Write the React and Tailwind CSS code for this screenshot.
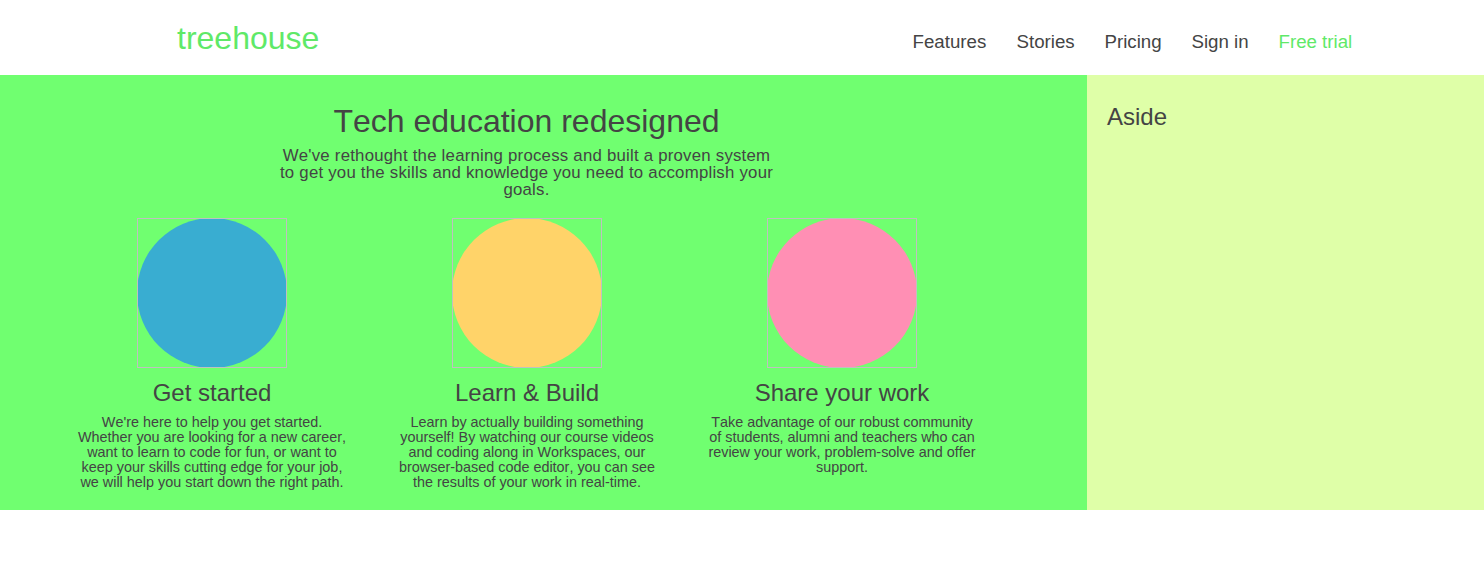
const navItems = [
  { label: 'Features', width: 'w-[74px]' },
  { label: 'Stories', width: 'w-[58px]' },
  { label: 'Pricing', width: 'w-[57px]' },
  { label: 'Sign in', width: 'w-[57px]' },
];

const features = [
  {
    title: 'Get started',
    color: 'fill-[#39add1]',
    lines: [
      "We're here to help you get started.",
      'Whether you are looking for a new career,',
      'want to learn to code for fun, or want to',
      'keep your skills cutting edge for your job,',
      'we will help you start down the right path.',
    ],
  },
  {
    title: 'Learn & Build',
    color: 'fill-[#ffd369]',
    lines: [
      'Learn by actually building something',
      'yourself! By watching our course videos',
      'and coding along in Workspaces, our',
      'browser-based code editor, you can see',
      'the results of your work in real-time.',
    ],
  },
  {
    title: 'Share your work',
    color: 'fill-[#ff8fb4]',
    lines: [
      'Take advantage of our robust community',
      'of students, alumni and teachers who can',
      'review your work, problem-solve and offer',
      'support.',
    ],
  },
];

function Header() {
  return (
    <header className="flex h-[75px] justify-between pl-[177px] pr-[131.5px]">
      <h1 className="mt-[20px] text-[32px] leading-[37px] text-[#5fe968]">treehouse</h1>
      <nav className="mt-[31px] flex gap-[30px] text-[18.7px] leading-[21px] whitespace-nowrap">
        {navItems.map((item) => (
          <a key={item.label} className={item.width}>{item.label}</a>
        ))}
        <a className="w-[74px] text-[#5fe968]">Free trial</a>
      </nav>
    </header>
  );
}

function Feature({ title, color, lines }) {
  return (
    <section className="flex w-[315px] flex-col items-center">
      <svg className="h-[150px] w-[150px] border border-[#c0c0c0]" viewBox="1 1 148 148">
        <circle cx="75" cy="75" r="75" className={color} />
      </svg>
      <h3 className="mt-[11px] pl-px text-[24px] leading-[28px]">{title}</h3>
      <p className="mt-[8px] pl-px text-center text-[14.4px] leading-[15px] whitespace-nowrap">
        {lines.map((line) => (
          <span key={line} className="block">{line}</span>
        ))}
      </p>
    </section>
  );
}

export default function App() {
  return (
    <div className="min-h-[587px] bg-white font-['Liberation_Sans',Arial,sans-serif] text-[#444444] [font-kerning:none]">
      <Header />
      <div className="flex h-[435px]">
        <main className="w-[1087px] bg-[#70ff70] pl-[54px]">
          <div className="w-[945px] pt-[28px] text-center">
            <h2 className="text-[32px] leading-[37px]">Tech education redesigned</h2>
            <p className="mt-[7px] text-[16.8px] leading-[17px] tracking-[0.23px]">
              <span className="block">We&apos;ve rethought the learning process and built a proven system</span>
              <span className="block">to get you the skills and knowledge you need to accomplish your</span>
              <span className="block">goals.</span>
            </p>
          </div>
          <div className="mt-[20px] flex w-[945px]">
            {features.map((feature) => (
              <Feature key={feature.title} {...feature} />
            ))}
          </div>
        </main>
        <aside className="flex-1 bg-[#dfffa8] pt-[28px] pl-[20px]">
          <h3 className="text-[24px] leading-[28px]">Aside</h3>
        </aside>
      </div>
    </div>
  );
}
